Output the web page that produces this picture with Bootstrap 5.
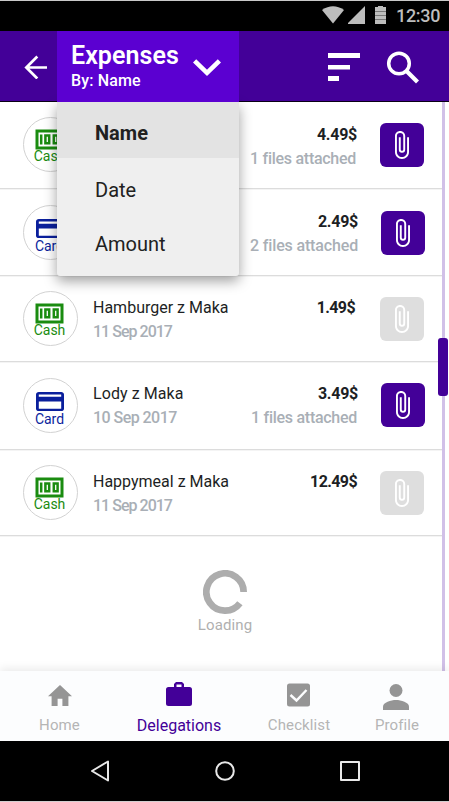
<!DOCTYPE html>
<html lang="en">
<head>
<meta charset="utf-8">
<meta name="viewport" content="width=device-width, initial-scale=1">
<title>Expenses</title>
<link href="https://cdn.jsdelivr.net/npm/bootstrap@5.3.0/dist/css/bootstrap.min.css" rel="stylesheet">
<style>
body{font-family:Roboto,"Liberation Sans",sans-serif;color:#1d1f24;width:449px;height:802px;overflow:hidden;background:#fff}
svg{display:block;flex:none}
.phone{width:449px;height:802px;border-top:1px solid #c9c9c9;border-bottom:1px solid #d3cfd0}
.status{height:30px;background:#000;color:#bdbdbd;padding:5px 9px 0 322px}
.clock{font-size:18px;line-height:19px;font-weight:500;letter-spacing:-.3px;margin-left:9px}
.appbar{height:71px;background:#430098;border-bottom:1px solid #0a0016;padding-left:24px}
.picker{width:182px;height:71px;margin-left:10px;background:#5b00d1;padding:9px 0 0 14px;color:#fff;z-index:5}
.picker h1{font-size:25px;line-height:31px;font-weight:600;margin:0;letter-spacing:.05px}
.picker p{font-size:16px;line-height:20px;font-weight:500;margin:0;letter-spacing:.15px}
.picker svg{margin:16px 17px 0 auto}
.sortmenu{left:57px;top:71px;width:182px;height:174px;background:#efefef;border-radius:0 0 3px 3px;box-shadow:0 5px 13px rgba(0,0,0,.38);font-size:20px;z-index:4}
.sortmenu a{display:block;color:#212121;text-decoration:none;padding-left:38px;height:56px;line-height:62px}
.sortmenu a.on{background:#e3e3e3;font-weight:700}
.sortmenu a+a{line-height:64px;height:54px}
.sortmenu a+a+a{line-height:65px}
.scroller{height:569px}
.feed{width:442px;flex:none}
.rail{width:3px;background:#d1c0e8}
.thumb{left:438px;top:236px;width:10px;height:58px;border-radius:3px;background:#430098}
.entry{height:87px;border-bottom:1px solid #dcdcdc;padding-left:23px;box-shadow:0 1px 0 #f4f4f4}
.entry.h86{height:86px}.entry.h88{height:88px}
.kind{width:55px;height:55px;border:1px solid #d2d2d2;border-radius:50%;margin-top:15px;font-size:14px;line-height:16px;padding:11px 2px 0 0;flex:none}
.kind span{margin-top:-2px}
.cash{color:#1a8c10}
.cardkind{color:#0a1f9c;margin-top:16px;padding-top:13px}
.cardkind span{margin-top:0}
.what{margin:20px 0 0 15px;width:149px;font-size:16px;line-height:24px;white-space:nowrap}
.shift .what{letter-spacing:.08px}
.sum{margin-top:20px;width:115px;font-size:16px;line-height:24px;text-align:right;white-space:nowrap}
.sum.low{margin-top:21px}
.sum.in{padding-right:2px}
.sum b{font-weight:700;letter-spacing:-.25px}
.shift .sum{width:117px;padding-right:1px}
.tight b{letter-spacing:-.6px}
.quiet{color:#a9afb6;font-weight:500}
.what .quiet{letter-spacing:-.98px}
.shift .what .quiet{letter-spacing:-.55px}
.sum .quiet{letter-spacing:-.28px}
.sum .inset{padding-right:1px}
.shift .two{letter-spacing:-.15px}
.clip{width:44px;height:44px;border-radius:6px;background:#430098;color:#fff;margin:21px 18px 0 auto;border:0;padding:0}
.clip.off{background:#dedede}
.shift .clip{margin-right:17px}
.clip.low{margin-top:22px}
.loading{margin-top:34px;color:#b0b0b0;font-size:15px;line-height:18px;letter-spacing:.1px}
.loading span{margin-top:2px}
.tabs{height:70px;background:#fcfdfe;box-shadow:0 -2px 9px rgba(0,0,0,.09);z-index:2}
.tabs a{width:119px;color:#b5b5b5;text-decoration:none;font-size:15px;line-height:18px;letter-spacing:.1px;height:70px}
.tabs svg{color:#959595}
.tabs .pic{height:45px}
.tabs a.on,.tabs a.on svg{color:#430098}
.tabs a.on{font-size:16px;width:120px;line-height:20px;letter-spacing:0}
.tabs a.task{width:120px}
.sys{height:60px;background:#000}
</style>
<script src="https://cdn.jsdelivr.net/npm/bootstrap@5.3.0/dist/js/bootstrap.bundle.min.js"></script>
</head>
<body>
<svg width="0" height="0" class="position-absolute">
<symbol id="clip" viewBox="7 1 11 22"><path fill="currentColor" d="M16.5 6v11.5c0 2.21-1.79 4-4 4s-4-1.79-4-4V5a2.5 2.5 0 0 1 5 0v10.5c0 .55-.45 1-1 1s-1-.45-1-1V6H10v9.5a2.5 2.5 0 0 0 5 0V5c0-2.21-1.79-4-4-4S7 2.790 7 5v12.5c0 3.040 2.460 5.500 5.500 5.500s5.500-2.460 5.500-5.500V6z"/></symbol>
<symbol id="note" viewBox="0 0 29 21"><g fill="none" stroke="currentColor"><path stroke-width="3" d="M2 2h25v17H2z"/><path stroke-width="2.500" d="M6.200 5.500v10M10.400 6.600h3.800v7.600h-3.800zM18.800 6.600h3.800v7.600h-3.800z"/></g></symbol>
<symbol id="plastic" viewBox="2 4 20 16" preserveAspectRatio="none"><path fill="currentColor" d="M20 4H4c-1.11 0-1.99.89-1.99 2L2 18c0 1.110.89 2 2 2h16c1.110 0 2-.89 2-2V6c0-1.110-.89-2-2-2zm0 14H4v-6h16v6zm0-10H4V6h16v2z"/></symbol>
</svg>
<div class="phone d-flex flex-column">
  <div class="status d-flex align-items-start">
    <svg width="22" height="18" viewBox="0 0 22 18" fill="currentColor"><path d="M0 4Q11-3.500 22 4L11 17.500z"/></svg>
    <svg class="ms-1" width="17" height="18" viewBox="0 0 17 18" fill="currentColor"><path d="M17 0v18H-1z"/></svg>
    <svg class="ms-2" width="14" height="18" viewBox="-2 0 14 18"><path fill="#bdbdbd" d="M3 0h5v1h3v17H0V1h3z"/><path stroke="#777" d="M0 5.500h11M0 9.500h11M0 13.500h11"/></svg>
    <span class="clock">12:30</span>
  </div>
  <header class="appbar d-flex position-relative">
    <svg class="mt-4" width="23" height="24" viewBox="-.8 0 23 24" fill="none" stroke="#fff" stroke-width="2.700"><path d="M23 12.500H2M12.500 1.500l-11 11 11 11"/></svg>
    <div class="picker d-flex">
      <div><h1>Expenses</h1><p>By: Name</p></div>
      <svg width="30" height="24" viewBox="-1 -3 30 24" fill="none" stroke="#fff" stroke-width="4.600"><path d="M1.600 1.800 14 13.800 26.400 1.800"/></svg>
    </div>
    <div class="d-flex ms-auto">
      <svg width="33" height="71" viewBox="-1 0 33 71" fill="#fff"><path d="M0 22h32.500v5H0zM0 34h22v4.500H0zM0 45h11v5H0z"/></svg>
      <svg class="ms-4" width="65" height="71" viewBox="-3 -.5 65 71"><g fill="none" stroke="#fff"><circle cx="12" cy="32" r="10.300" stroke-width="3.500"/><path d="m19.500 39.500 11 11" stroke-width="4.300"/></g></svg>
    </div>
    <nav class="sortmenu position-absolute"><a class="on" href="#">Name</a><a href="#">Date</a><a href="#">Amount</a></nav>
  </header>
  <main class="scroller d-flex position-relative">
    <div class="feed">
      <div class="entry d-flex"><div class="kind cash d-flex flex-column align-items-center"><svg width="29" height="21"><use href="#note"/></svg><span>Cash</span></div><div class="what"></div><div class="sum low"><b>4.49$</b><br><span class="quiet inset">1 files attached</span></div><button class="clip d-flex align-items-center justify-content-center"><svg width="14" height="28"><use href="#clip"/></svg></button></div>
      <div class="entry shift d-flex"><div class="kind cardkind d-flex flex-column align-items-center"><svg width="28" height="19"><use href="#plastic"/></svg><span>Card</span></div><div class="what"></div><div class="sum low"><b>2.49$</b><br><span class="quiet two">2 files attached</span></div><button class="clip low d-flex align-items-center justify-content-center"><svg width="14" height="28"><use href="#clip"/></svg></button></div>
      <div class="entry h86 d-flex"><div class="kind cash d-flex flex-column align-items-center"><svg width="29" height="21"><use href="#note"/></svg><span>Cash</span></div><div class="what">Hamburger z Maka<br><span class="quiet">11 Sep 2017</span></div><div class="sum in tight"><b>1.49$</b></div><button class="clip off d-flex align-items-center justify-content-center"><svg width="14" height="28"><use href="#clip"/></svg></button></div>
      <div class="entry h88 shift d-flex"><div class="kind cardkind d-flex flex-column align-items-center"><svg width="28" height="19"><use href="#plastic"/></svg><span>Card</span></div><div class="what">Lody z Maka<br><span class="quiet">10 Sep 2017</span></div><div class="sum"><b>3.49$</b><br><span class="quiet inset">1 files attached</span></div><button class="clip d-flex align-items-center justify-content-center"><svg width="14" height="28"><use href="#clip"/></svg></button></div>
      <div class="entry h86 d-flex"><div class="kind cash d-flex flex-column align-items-center"><svg width="29" height="21"><use href="#note"/></svg><span>Cash</span></div><div class="what">Happymeal z Maka<br><span class="quiet">11 Sep 2017</span></div><div class="sum tight"><b>12.49$</b></div><button class="clip off d-flex align-items-center justify-content-center"><svg width="14" height="28"><use href="#clip"/></svg></button></div>
      <div class="loading d-flex flex-column align-items-center ps-2"><svg width="44" height="44" viewBox="-22 -22 44 44"><path fill="none" stroke="#adadad" stroke-width="6.700" d="M18.650 0A18.650 18.650 0 1 0 14.900 11.220"/></svg><span>Loading</span></div>
    </div>
    <div class="rail"></div>
    <div class="thumb position-absolute"></div>
  </main>
  <nav class="tabs d-flex text-center">
    <a href="#"><div class="pic d-flex justify-content-center"><svg width="24" height="35" viewBox="0 -14 24 35"><path fill="currentColor" transform="scale(1.2 1.24) translate(-2 -3)" d="M10 20v-6h4v6h5v-8h3L12 3 2 12h3v8z"/></svg></div>Home</a>
    <a href="#" class="on"><div class="pic d-flex justify-content-center"><svg width="26" height="35" viewBox="0 -11 26 35"><path fill="currentColor" fill-rule="evenodd" d="M8 5V2l2-2h6l2 2v3h5.500A2.500 2.500 0 0 1 26 7.500v14a2.500 2.500 0 0 1-2.500 2.500h-21A2.500 2.500 0 0 1 0 21.500v-14A2.500 2.500 0 0 1 2.500 5zm2.500 0h5V2.500h-5z"/></svg></div>Delegations</a>
    <a href="#" class="task"><div class="pic d-flex justify-content-center"><svg width="24" height="36" viewBox="0 -12.500 24 36"><rect width="23" height="23" rx="2.500" fill="currentColor"/><path d="m3.500 11.500 6 5.500L19.500 6.500" fill="none" stroke="#fcfdfe" stroke-width="2.400"/></svg></div>Checklist</a>
    <a href="#" class="w-auto ps-3"><div class="pic d-flex justify-content-center"><svg width="28" height="40" viewBox="0 -13 28 40"><g fill="currentColor"><circle cx="13" cy="6.500" r="6.500"/><path d="M0 26v-3.500C0 18.500 8 16 13 16s13 2.500 13 6.500V26z"/></g></svg></div>Profile</a>
  </nav>
  <div class="sys"><svg width="449" height="60" fill="none" stroke="#e8e8e8" stroke-width="2" stroke-linejoin="round"><path d="M108 20.500v19L92 30z"/><circle cx="225" cy="30" r="8.800"/><path d="M341 21h18v18h-18z"/></svg></div>
</div>
</body>
</html>
